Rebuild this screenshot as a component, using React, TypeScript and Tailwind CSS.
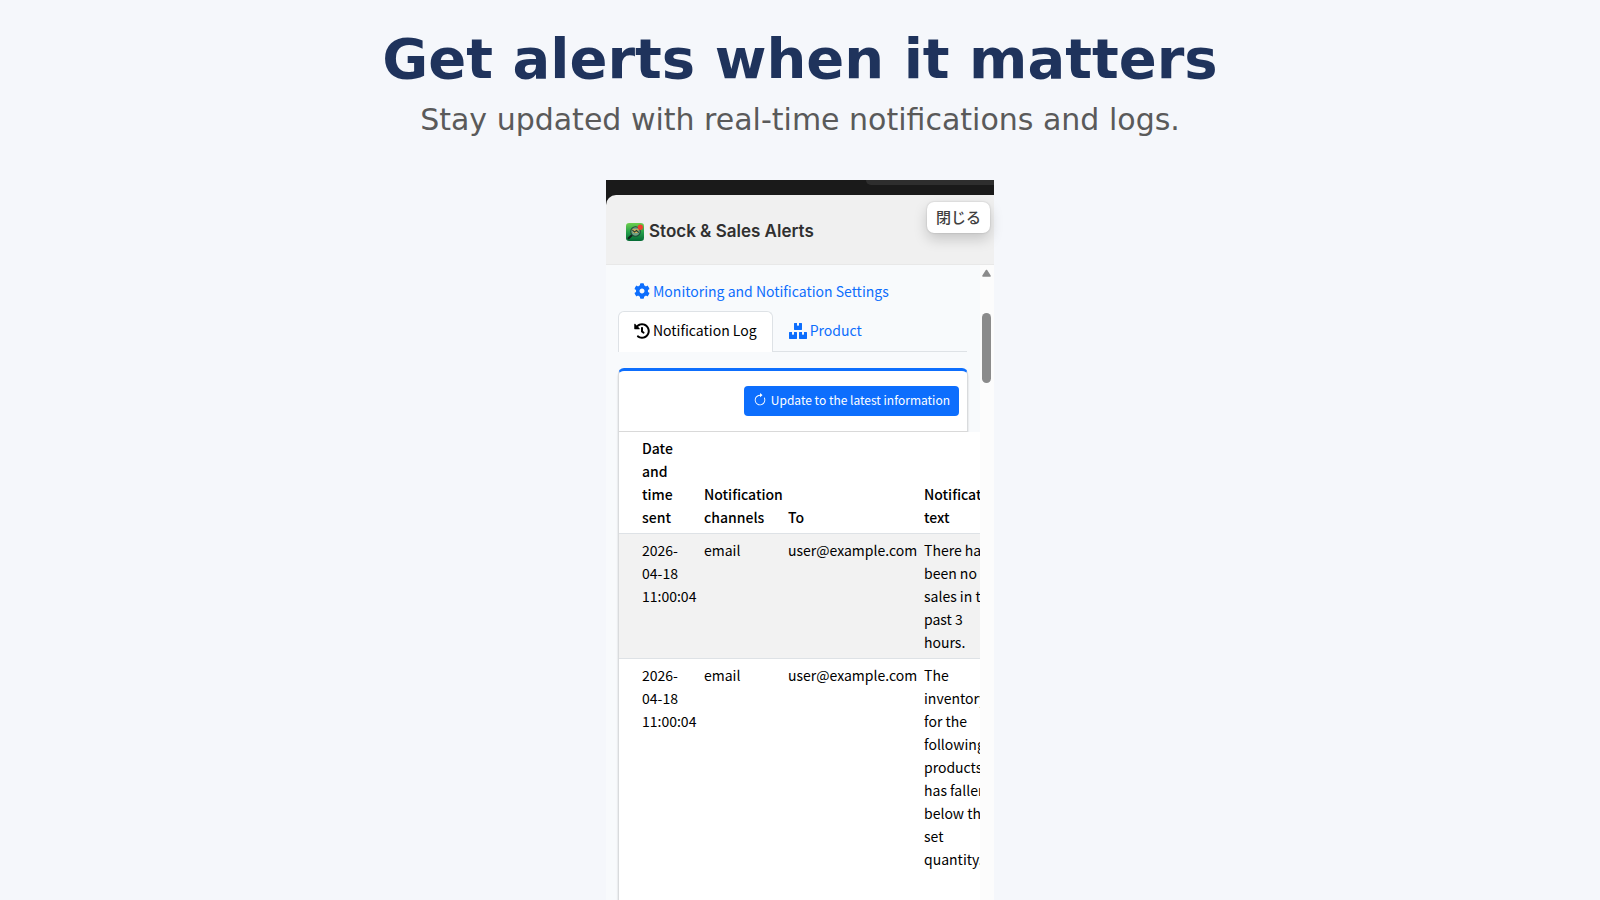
import { FaBoxes, FaCog, FaHistory } from 'react-icons/fa';
import { BsArrowClockwise } from 'react-icons/bs';

type LogEntry = { sent: string; channel: string; to: string; text: string };

const entries: LogEntry[] = [
  {
    sent: '2026-04-18 11:00:04',
    channel: 'email',
    to: 'user@example.com',
    text: 'There has been no sales in the past 3 hours.',
  },
  {
    sent: '2026-04-18 11:00:04',
    channel: 'email',
    to: 'user@example.com',
    text: 'The inventory for the following products has fallen below the set quantity.',
  },
];

function AppIcon() {
  return (
    <svg viewBox="0 0 34 34" className="size-[18px] shrink-0" aria-hidden="true">
      <defs>
        <linearGradient id="app-bg" x1="0" y1="0" x2="0" y2="1">
          <stop offset="0" stopColor="#6fd04e" />
          <stop offset="0.5" stopColor="#25a04a" />
          <stop offset="1" stopColor="#046a34" />
        </linearGradient>
      </defs>
      <rect width="34" height="34" rx="6" fill="url(#app-bg)" />
      <path d="M12 22 L5 29" stroke="#10251c" strokeWidth="4" strokeLinecap="round" />
      <circle cx="18" cy="16" r="9" fill="#6f9f84" stroke="#1d4a35" strokeWidth="2" />
      <path d="M11 12 H24 L22 19 H14 Z" fill="#d9b25a" />
      <path d="M12 13 L16 17 L20 14 L24 18" stroke="#1f3b30" strokeWidth="2" fill="none" />
      <circle cx="27" cy="8" r="5" fill="#f0402f" />
    </svg>
  );
}

function Header() {
  return (
    <div className="bg-[#1a1a1a]">
      <div className="flex h-[15px] justify-end">
        <div className="h-[5px] w-32 rounded-bl-[10px] bg-[#2e2e2e]" />
      </div>
      <header className="flex h-[70px] items-start justify-between rounded-tl-[10px] border-b border-[#e8e8e8] bg-[#f0f0f0] pr-1 pl-5">
        <h2 className="flex h-full items-center gap-[5px] pt-1 font-['Inter','Liberation_Sans',sans-serif] text-[17px] font-semibold text-[#303030]">
          <AppIcon />
          Stock &amp; Sales Alerts
        </h2>
        <button
          type="button"
          className="mt-[7px] h-[31px] rounded-[7px] bg-white px-[9px] pb-[2px] text-[15px] leading-none font-medium text-[#404040] shadow-[0_0_2px_rgba(0,0,0,0.2),0_6px_14px_rgba(0,0,0,0.18)]"
        >
          閉じる
        </button>
      </header>
    </div>
  );
}

function Tabs() {
  return (
    <nav className="flex flex-wrap border-b border-[#dee2e6]">
      <a href="#settings" className="flex h-10 items-center gap-[3px] px-4 text-[#0d6efd]">
        <FaCog className="size-4" />
        Monitoring and Notification Settings
      </a>
      <div className="-mb-px flex w-full">
        <a
          href="#log"
          aria-current="page"
          className="flex h-[41px] items-center gap-[3px] rounded-t-[6px] border border-b-0 border-[#dee2e6] bg-white px-[15px] pb-[3px] text-black"
        >
          <FaHistory className="size-4" />
          Notification Log
        </a>
        <a href="#product" className="flex h-10 items-center gap-[3px] px-4 pb-px text-[#0d6efd]">
          <FaBoxes className="h-4 w-[18px]" />
          Product
        </a>
      </div>
    </nav>
  );
}

function LogCard() {
  return (
    <section className="mt-4 -mr-px min-h-[700px] rounded-t-[6px] border-x border-t-[3px] border-x-[#d9dbdd] border-t-[#0d6efd] bg-white shadow-[0_3px_2px_rgba(0,0,0,0.2)]">
      <div className="flex h-[61px] items-start justify-end border-b border-[#d9d9d9] px-2 pt-[15px]">
        <button
          type="button"
          className="flex h-[30px] items-center gap-1 rounded-[4px] bg-[#0d6efd] px-[9px] pb-[3px] text-[12px] text-white"
        >
          <BsArrowClockwise className="size-[14px]" />
          Update to the latest information
        </button>
      </div>
      <table className="w-[384px] table-fixed border-collapse bg-white text-left text-black">
        <colgroup>
          <col className="w-[81px]" />
          <col className="w-[84px]" />
          <col className="w-[136px]" />
          <col />
        </colgroup>
        <thead>
          <tr className="border-b border-[#dee2e6] align-bottom">
            <th className="px-1 pt-[5px] pb-1 pl-[23px] font-medium">Date and time sent</th>
            <th className="px-1 pt-[5px] pb-1 font-medium">Notification channels</th>
            <th className="px-1 pt-[5px] pb-1 font-medium">To</th>
            <th className="px-1 pt-[5px] pb-1 font-medium">Notification text</th>
          </tr>
        </thead>
        <tbody>
          {entries.map((entry, index) => (
            <tr
              key={index}
              className="border-b border-[#dee2e6] align-top last:h-[280px] odd:bg-[#f2f2f2]"
            >
              <td className="px-1 pt-[5px] pb-1 pl-[23px]">{entry.sent}</td>
              <td className="px-1 pt-[5px] pb-1">{entry.channel}</td>
              <td className="px-1 pt-[5px] pb-1">{entry.to}</td>
              <td className="px-1 pt-[5px] pb-1">{entry.text}</td>
            </tr>
          ))}
        </tbody>
      </table>
    </section>
  );
}

function ScrollTrack() {
  return (
    <div className="flex w-[14px] shrink-0 flex-col items-start bg-[#fcfcfc] pt-1 pl-[2px]" aria-hidden="true">
      <svg viewBox="0 0 9 8" className="h-2 w-[9px]">
        <path d="M4.5 1.5 L8 7 H1 Z" fill="#8b8b8b" stroke="#8b8b8b" strokeWidth="1.6" strokeLinejoin="round" />
      </svg>
      <div className="mt-9 h-[70px] w-[9px] rounded-full bg-[#8b8b8b]" />
    </div>
  );
}

export default function App() {
  return (
    <main className="flex h-screen flex-col items-center overflow-hidden bg-[#f5f7fb]">
      <h1 className="mt-[25px] text-center font-['DejaVu_Sans',sans-serif] text-[56px] leading-[68px] font-bold text-[#1f335c]">
        Get alerts when it matters
      </h1>
      <p className="mt-[7px] text-center font-['DejaVu_Sans',sans-serif] text-[30px] leading-10 text-[#5a5a5a]">
        Stay updated with real-time notifications and logs.
      </p>
      <div className="mt-10 flex min-h-0 w-[388px] max-w-full flex-1 flex-col font-['Noto_Sans_CJK_JP',sans-serif] text-[14px] leading-[23px]">
        <Header />
        <div className="flex min-h-0 flex-1 bg-[#f8fafc]">
          <div className="min-w-0 flex-1 overflow-hidden pt-[6px] pr-[13px] pl-3">
            <Tabs />
            <LogCard />
          </div>
          <ScrollTrack />
        </div>
      </div>
    </main>
  );
}
